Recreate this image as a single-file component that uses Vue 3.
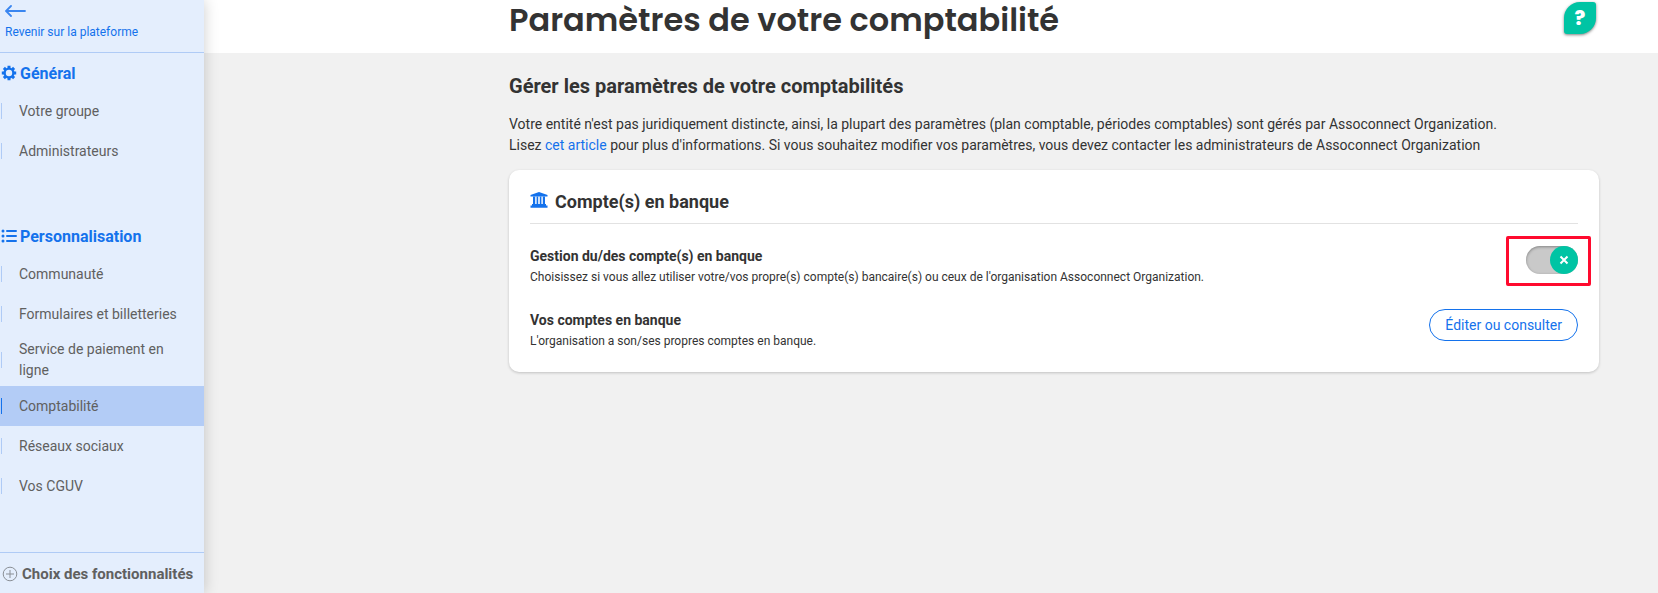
<script setup>
import { ref } from "vue";

const current = ref("Comptabilité");
const ownAccounts = ref(true);

const sections = [
  {
    title: "Général",
    icon: "gear",
    items: ["Votre groupe", "Administrateurs"],
  },
  {
    title: "Personnalisation",
    icon: "list",
    items: [
      "Communauté",
      "Formulaires et billetteries",
      "Service de paiement en ligne",
      "Comptabilité",
      "Réseaux sociaux",
      "Vos CGUV",
    ],
  },
];
</script>

<template>
  <div class="app">
    <aside class="sidebar">
      <a href="#" class="back">
        <svg width="22" height="14" viewBox="0 0 22 14">
          <path d="M6 2 L1 7 L6 12 M1 7 H20" />
        </svg>
        <span>Revenir sur la plateforme</span>
      </a>
      <nav>
        <section v-for="section in sections" :key="section.title">
          <h2>
            <svg v-if="section.icon === 'gear'" class="icon" width="16" height="16" viewBox="0 0 16 16">
              <g class="teeth">
                <path d="M8 0.8 V3 M8 13 V15.2 M0.8 8 H3 M13 8 H15.2" />
                <path d="M2.9 2.9 L4.5 4.5 M11.5 11.5 L13.1 13.1 M2.9 13.1 L4.5 11.5 M11.5 4.5 L13.1 2.9" />
              </g>
              <circle class="wheel" cx="8" cy="8" r="4.4" />
            </svg>
            <svg v-else class="icon" width="16" height="16" viewBox="0 0 16 16">
              <path class="bars" d="M6 3 H15 M6 8 H15 M6 13 H15" />
              <circle cx="2" cy="3" r="1.5" />
              <circle cx="2" cy="8" r="1.5" />
              <circle cx="2" cy="13" r="1.5" />
            </svg>
            {{ section.title }}
          </h2>
          <ul>
            <li v-for="item in section.items" :key="item">
              <a
                href="#"
                :class="{ active: item === current }"
                @click.prevent="current = item"
                >{{ item }}</a
              >
            </li>
          </ul>
        </section>
      </nav>
      <a href="#" class="features">
        <svg width="16" height="16" viewBox="0 0 16 16">
          <circle cx="8" cy="8" r="6.8" />
          <path d="M8 4 V12 M4 8 H12" />
        </svg>
        Choix des fonctionnalités
      </a>
    </aside>

    <main>
      <header>
        <div class="column title">
          <h1>Paramètres de votre comptabilité</h1>
          <button class="help" type="button">?</button>
        </div>
      </header>

      <div class="column content">
        <h2>Gérer les paramètres de votre comptabilités</h2>
        <p class="intro">
          Votre entité n'est pas juridiquement distincte, ainsi, la plupart des
          paramètres (plan comptable, périodes comptables) sont gérés par
          Assoconnect Organization.<br />
          Lisez <a href="#">cet article</a> pour plus d'informations. Si vous
          souhaitez modifier vos paramètres, vous devez contacter les
          administrateurs de Assoconnect Organization
        </p>

        <section class="card">
          <h3>
            <svg width="18" height="18" viewBox="0 0 18 18">
              <path d="M9 1 L17.5 4 V5.6 H0.5 V4 Z" />
              <path d="M3 5.6 H5.2 V13 H3 Z M6.6 5.6 H8.2 V13 H6.6 Z M9.8 5.6 H11.4 V13 H9.8 Z M12.8 5.6 H15 V13 H12.8 Z" />
              <path d="M2 13 H16 V14.6 H17.5 V16.8 H0.5 V14.6 H2 Z" />
            </svg>
            Compte(s) en banque
          </h3>
          <div class="row">
            <div>
              <h4 id="management">Gestion du/des compte(s) en banque</h4>
              <p>
                Choisissez si vous allez utiliser votre/vos propre(s) compte(s)
                bancaire(s) ou ceux de l'organisation Assoconnect Organization.
              </p>
            </div>
            <label class="switch">
              <input
                v-model="ownAccounts"
                type="checkbox"
                role="switch"
                aria-labelledby="management"
              />
              <span class="knob">
                <svg width="10" height="10" viewBox="0 0 10 10">
                  <path d="M1.5 1.5 L8.5 8.5 M8.5 1.5 L1.5 8.5" />
                </svg>
              </span>
            </label>
          </div>
          <div class="row">
            <div>
              <h4>Vos comptes en banque</h4>
              <p>L'organisation a son/ses propres comptes en banque.</p>
            </div>
            <button class="edit" type="button">Éditer ou consulter</button>
          </div>
        </section>
      </div>
    </main>
  </div>
</template>

<style>
body {
  margin: 0;
  background-color: #f1f1f1;
}
</style>

<style scoped>
* {
  box-sizing: border-box;
}
.app {
  display: flex;
  min-height: 100vh;
  font-family: Roboto, "Liberation Sans", sans-serif;
  font-size: 14px;
  line-height: 21px;
  color: #333;
}
h1,
h2,
h3,
h4,
p,
ul {
  margin: 0;
  padding: 0;
}
a {
  color: #1472ec;
  text-decoration: none;
}
button {
  font-family: inherit;
  cursor: pointer;
}

/* sidebar */
.sidebar {
  display: flex;
  flex-direction: column;
  flex: none;
  width: 204px;
  background-color: #e4eefd;
  box-shadow: 0 0 14px rgba(0, 0, 0, 0.2);
  z-index: 1;
}
.back {
  display: flex;
  flex-direction: column;
  height: 53px;
  padding: 4px 5px 0;
  border-bottom: 1px solid #afcbf6;
  font-size: 12px;
  line-height: 16px;
}
.back span {
  margin-top: 6px;
}
.back path {
  fill: none;
  stroke: #3a86f0;
  stroke-width: 1.8;
  stroke-linecap: round;
}
nav {
  display: flex;
  flex-direction: column;
  gap: 47px;
  padding: 2px 0 24px;
}
nav h2 {
  display: flex;
  align-items: center;
  gap: 3px;
  height: 36px;
  padding-left: 1px;
  font-size: 16px;
  color: #1472ec;
}
.icon {
  fill: #1472ec;
}
.teeth {
  stroke: #1472ec;
  stroke-width: 3;
}
.wheel {
  fill: none;
  stroke: #1472ec;
  stroke-width: 2.4;
}
.bars {
  stroke: #1472ec;
  stroke-width: 2;
  stroke-linecap: round;
}
nav ul {
  list-style: none;
}
nav li a {
  display: flex;
  align-items: center;
  min-height: 40px;
  padding: 5px 24px 5px 1px;
  color: #606060;
}
nav li a::before {
  content: "";
  flex: none;
  width: 1px;
  height: 16px;
  margin-right: 17px;
  background-color: #afcbf6;
}
nav li a.active {
  background-color: #b3ccf6;
}
nav li a.active::before {
  background-color: #1472ec;
}
.features {
  display: flex;
  align-items: center;
  gap: 4px;
  height: 41px;
  margin-top: auto;
  padding: 2px 0 0 2px;
  border-top: 1px solid #afcbf6;
  font-size: 15px;
  font-weight: bold;
  color: #606060;
}
.features svg {
  fill: none;
  stroke: #8a8f96;
}

/* page */
main {
  flex: 1;
  min-width: 0;
  background-color: #f1f1f1;
}
header {
  height: 53px;
  background-color: #fff;
}
.column {
  width: 75%;
  max-width: 1090px;
  margin: 0 59px 0 auto;
}
.title {
  display: flex;
  justify-content: space-between;
  align-items: flex-start;
}
h1 {
  font-family: Poppins, Inter, sans-serif;
  font-size: 32px;
  font-weight: 600;
  line-height: 40px;
}
.help {
  width: 32px;
  height: 32px;
  margin: 2px 3px 0 0;
  padding: 0;
  border: none;
  border-radius: 16px 3px 16px 3px;
  background-color: #00c4a4;
  box-shadow: 0 1px 3px rgba(0, 0, 0, 0.5);
  font-family: Poppins, Inter, sans-serif;
  font-size: 20px;
  font-weight: 800;
  color: #fff;
}
.content {
  padding-top: 18px;
}
.content h2 {
  font-size: 20px;
  line-height: 30px;
}
.intro {
  margin: 13px 0 14px;
}
.card {
  padding: 16px 21px 20px;
  border-radius: 10px;
  background-color: #fff;
  box-shadow: 0 1px 3px rgba(0, 0, 0, 0.2);
}
.card h3 {
  display: flex;
  align-items: center;
  gap: 7px;
  padding-bottom: 6px;
  border-bottom: 1px solid #e2e2e2;
  font-size: 18px;
  line-height: 31px;
}
.card h3 svg {
  margin-bottom: 3px;
  fill: #1472ec;
}
.row {
  display: flex;
  justify-content: space-between;
  align-items: flex-start;
  margin-top: 21px;
}
.row h4 {
  line-height: 22px;
}
.row p {
  font-size: 12px;
}
.switch {
  position: relative;
  width: 52px;
  height: 28px;
  margin-top: 1px;
}
/* red frame pointing out the switch */
.switch::before {
  content: "";
  position: absolute;
  inset: -10px -13px -12px -20px;
  border: 3px solid #ff0a2e;
  border-radius: 2px;
}
.switch input {
  appearance: none;
  position: absolute;
  inset: 0;
  width: 100%;
  height: 100%;
  margin: 0;
  border-radius: 14px;
  background-color: #c9c9c9;
  box-shadow: inset 0 1px 3px rgba(0, 0, 0, 0.35);
  cursor: pointer;
}
.knob {
  position: absolute;
  top: 0;
  left: 0;
  display: flex;
  align-items: center;
  justify-content: center;
  width: 28px;
  height: 28px;
  border-radius: 50%;
  background-color: #00c4a4;
  pointer-events: none;
}
.switch input:checked + .knob {
  left: 24px;
}
.knob path {
  stroke: #fff;
  stroke-width: 2;
}
.edit {
  height: 32px;
  padding: 0 15px;
  border: 1px solid #1472ec;
  border-radius: 16px;
  background-color: #fff;
  font-size: 14px;
  color: #1472ec;
}
</style>
